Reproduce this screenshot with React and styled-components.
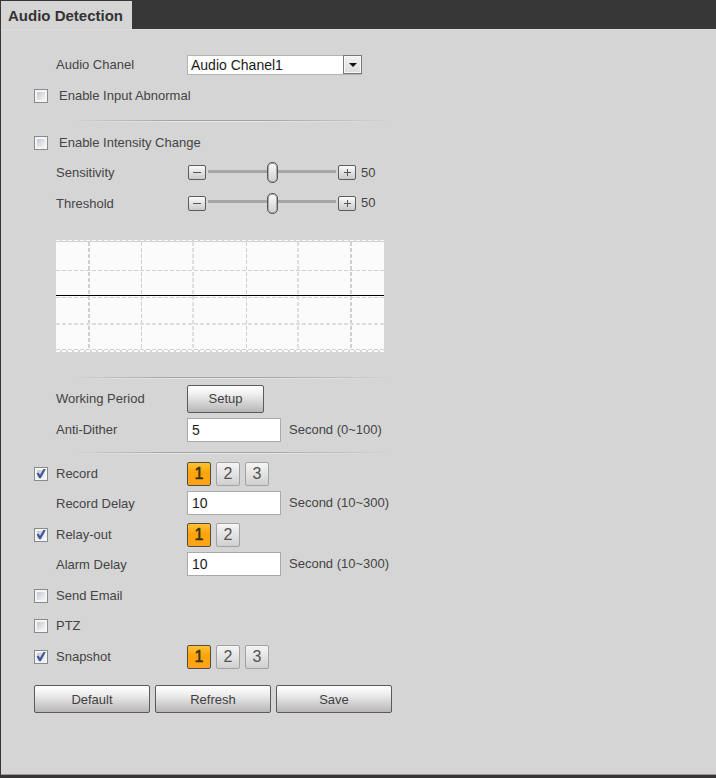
import React, { useState } from "react";
import styled, { createGlobalStyle } from "styled-components";

const GlobalStyle = createGlobalStyle`
  *, *::before, *::after { box-sizing: border-box; }
  body {
    margin: 0;
    background: #d5d5d5;
    color: #444;
    font: 13px/16px "Liberation Sans", Arial, sans-serif;
  }
  button, input, select { font-family: inherit; margin: 0; }
`;

const Page = styled.div`
  min-height: 100vh;
  display: flex;
  flex-direction: column;
  border-left: 1px solid #373535;
  border-bottom: 3px solid #373535;
  background: #d5d5d5;
`;

const TabBar = styled.header`
  display: flex;
  height: 29px;
  padding-top: 1px;
  background: #373737;
`;

const Tab = styled.h1`
  margin: 0;
  padding: 0 9px 0 7px;
  background: #d5d5d5;
  color: #333;
  font-size: 15px;
  font-weight: bold;
  line-height: 29px;
`;

const Panel = styled.form`
  flex: 1;
  padding: 20px 32px 60px 33px;
  border-top: 1px solid #dcdcdc;
  border-bottom: 1px solid #999;
`;

const Group = styled.div`
  display: grid;
  grid-template-rows: ${(p) => p.$rows};
`;

const Row = styled.div`
  display: grid;
  grid-template-columns: 22px 131px 1fr;
  align-items: center;
`;

const Label = styled.label`
  grid-column: 2;
  white-space: nowrap;
  padding-left: ${(p) => (p.$indent ? "3px" : "0")};
`;

const Field = styled.div`
  grid-column: 3;
  display: flex;
  align-items: center;
  gap: ${(p) => p.$gap || 0}px;
  padding-bottom: ${(p) => p.$lift || 0}px;
`;

const Checkbox = styled.input.attrs({ type: "checkbox" })`
  appearance: none;
  display: grid;
  place-items: center;
  width: 14px;
  height: 14px;
  border: 1px solid #8a8b8b;
  background: linear-gradient(135deg, #c4c8cf, #f6f6f6) center / 8px 8px no-repeat #f4f4f4;

  &:checked::after {
    content: "";
    width: 10px;
    height: 10px;
    background: #43589f;
    clip-path: polygon(6% 50%, 24% 40%, 40% 62%, 76% 2%, 98% 4%, 48% 98%, 32% 98%);
  }
`;

const SelectBox = styled.div`
  position: relative;
  width: 175px;
  height: 20px;
`;

const Select = styled.select`
  appearance: none;
  width: 100%;
  height: 100%;
  padding: 0 22px 0 3px;
  border: 1px solid #b4b4b8;
  border-radius: 0;
  background: #fff;
  color: #1b1b1b;
  font-size: 14px;
`;

const SelectArrow = styled.span`
  position: absolute;
  top: 0;
  right: 0;
  display: grid;
  place-items: center;
  width: 19px;
  height: 19px;
  border: 1px solid #777;
  background: linear-gradient(#f4f4f4, #dcdcdc);
  box-shadow: inset 0 0 0 1px #f8f8f8;
  pointer-events: none;
`;

const Divider = styled.hr`
  width: 320px;
  max-width: 100%;
  height: 2px;
  margin: ${(p) => p.$before}px 0 ${(p) => p.$after}px 38px;
  border: 0;
  background:
    linear-gradient(90deg, transparent, #a4a4a4 30%, #a4a4a4 60%, transparent) top / 100% 1px no-repeat,
    linear-gradient(90deg, transparent, #e6e6e6 30%, #e6e6e6 60%, transparent) bottom / 100% 1px no-repeat;
`;

const StepButton = styled.button`
  display: grid;
  place-items: center;
  width: 18px;
  height: 15px;
  padding: 0;
  border: 1px solid #5c5c5c;
  border-radius: 2px;
  background: linear-gradient(#fbfbfb, #c9c9c9);
`;

const Range = styled.input.attrs({ type: "range" })`
  appearance: none;
  width: 128px;
  height: 22px;
  background: linear-gradient(#a5a5a5, #a5a5a5) center 8px / 100% 3px no-repeat;

  &::-webkit-slider-thumb {
    appearance: none;
    width: 11px;
    height: 21px;
    border: 1px solid #585858;
    border-radius: 5px;
    background: linear-gradient(#fbfbfb, #cfcfcf);
    box-shadow: inset 0 0 0 1px #a8a8a8;
  }
`;

const Slider = styled.div`
  display: flex;
  align-items: center;
  gap: 2px;
  padding-left: 1px;
`;

const RangeValue = styled.output`
  margin-left: 5px;
`;

const Chart = styled.svg`
  display: block;
  margin: 21px 0 0 22px;
  max-width: 100%;
`;

const PushButton = styled.button`
  width: ${(p) => (p.$small ? "77px" : "116px")};
  height: 28px;
  padding: 0;
  border: 1px solid #5a5a5a;
  border-radius: 2px;
  background: linear-gradient(#fff, #f0f0f0 30%, #b8b6b6);
  color: #3f3f3f;
  font-size: 13px;
`;

const NumberInput = styled.input`
  width: 94px;
  height: 24px;
  padding: 0 4px;
  border: 1px solid #aaa;
  background: #fff;
  color: #1b1b1b;
  font-size: 14px;
`;

const ChannelButton = styled.button`
  width: 24px;
  height: 24px;
  padding: 0;
  border: 1px solid ${(p) => (p.$active ? "#514c45" : "#a2a2a2")};
  border-radius: 2px;
  background: ${(p) =>
    p.$active ? "linear-gradient(#ffc234, #ffa30a 45%, #ffa41c)" : "linear-gradient(#f5f5f5, #d0d0d0)"};
  color: ${(p) => (p.$active ? "#33330f" : "#505050")};
  -webkit-text-stroke: ${(p) => (p.$active ? "0.5px" : "0")};
  font-size: 16px;
  line-height: 20px;
`;

const Actions = styled.div`
  display: flex;
  gap: 5px;
  margin-top: 13px;
`;

function CheckRow({ id, label, checked, indent, children }) {
  return (
    <Row>
      <Checkbox id={id} defaultChecked={checked} />
      <Label htmlFor={id} $indent={indent}>{label}</Label>
      {children}
    </Row>
  );
}

function SliderRow({ id, label }) {
  const [value, setValue] = useState(50);
  return (
    <Row>
      <Label htmlFor={id}>{label}</Label>
      <Field $lift={1}>
        <Slider>
          <StepButton type="button" aria-label={`Decrease ${label}`} onClick={() => setValue(Math.max(0, value - 1))}>
            <svg width="9" height="9"><path d="M0 4.5h8" stroke="#555" /></svg>
          </StepButton>
          <Range id={id} value={value} onChange={(e) => setValue(Number(e.target.value))} />
          <StepButton type="button" aria-label={`Increase ${label}`} onClick={() => setValue(Math.min(100, value + 1))}>
            <svg width="9" height="9"><path d="M1 4.5h7M4.5 1v7" stroke="#555" /></svg>
          </StepButton>
        </Slider>
        <RangeValue htmlFor={id}>{value}</RangeValue>
      </Field>
    </Row>
  );
}

function NumberRow({ id, label, value, range, lift }) {
  return (
    <Row>
      <Label htmlFor={id}>{label}</Label>
      <Field $gap={8} $lift={lift}>
        <NumberInput id={id} defaultValue={value} inputMode="numeric" />
        <span>Second ({range})</span>
      </Field>
    </Row>
  );
}

function Channels({ count }) {
  const [active, setActive] = useState([1]);
  const toggle = (n) => setActive(active.includes(n) ? active.filter((x) => x !== n) : [...active, n]);
  return (
    <Field $gap={5}>
      {Array.from({ length: count }, (_, i) => i + 1).map((n) => (
        <ChannelButton
          key={n}
          type="button"
          $active={active.includes(n)}
          aria-pressed={active.includes(n)}
          onClick={() => toggle(n)}
        >
          {n}
        </ChannelButton>
      ))}
    </Field>
  );
}

function IntensityChart() {
  return (
    <Chart width="328" height="112" viewBox="0 0 328 112" role="img" aria-label="Audio intensity">
      <rect y="2" width="328" height="108" fill="#fbfbfb" />
      <g fill="none" stroke="#fbfbfb" strokeWidth="2" strokeDasharray="4 2">
        <path d="M0 1h328M0 111h328" />
      </g>
      <g fill="none" stroke="#cfcfcf" strokeDasharray="4 2">
        <path d="M0 1.5h328M0 109.5h328" />
        <path d="M0 30.5h328M0 57.5h328" />
        <path d="M85.5 2v108M190.5 2v108" />
        <path d="M33 2v108M295 2v108" strokeWidth="2" />
      </g>
      <g fill="none" stroke="#dedede" strokeWidth="2" strokeDasharray="4 2">
        <path d="M0 84h328M137 2v108M242 2v108" />
      </g>
      <path d="M0 55.5h328" stroke="#000" />
    </Chart>
  );
}

export default function App() {
  return (
    <>
      <GlobalStyle />
      <Page>
        <TabBar>
          <Tab>Audio Detection</Tab>
        </TabBar>
        <Panel onSubmit={(e) => e.preventDefault()}>
          <Group $rows="30px 32px">
            <Row>
              <Label htmlFor="channel">Audio Chanel</Label>
              <Field>
                <SelectBox>
                  <Select id="channel"><option>Audio Chanel1</option></Select>
                  <SelectArrow>
                    <svg width="8" height="4"><path d="M0 0h8L4 4z" fill="#111" /></svg>
                  </SelectArrow>
                </SelectBox>
              </Field>
            </Row>
            <CheckRow id="abnormal" label="Enable Input Abnormal" indent />
          </Group>
          <Divider $before={8} $after={5} />
          <Group $rows="31px 30px 31px">
            <CheckRow id="intensity" label="Enable Intensity Change" indent />
            <SliderRow id="sensitivity" label="Sensitivity" />
            <SliderRow id="threshold" label="Threshold" />
          </Group>
          <IntensityChart />
          <Divider $before={25} $after={4} />
          <Group $rows="31px 31px">
            <Row>
              <Label as="span">Working Period</Label>
              <Field><PushButton type="button" $small>Setup</PushButton></Field>
            </Row>
            <NumberRow id="dither" label="Anti-Dither" value="5" range="0~100" />
          </Group>
          <Divider $before={7} $after={4} />
          <Group $rows="31px 30px 31px 30px 31px 30px 31px">
            <CheckRow id="record" label="Record" checked><Channels count={3} /></CheckRow>
            <NumberRow id="record-delay" label="Record Delay" value="10" range="10~300" lift={2} />
            <CheckRow id="relay" label="Relay-out" checked><Channels count={2} /></CheckRow>
            <NumberRow id="alarm-delay" label="Alarm Delay" value="10" range="10~300" lift={2} />
            <CheckRow id="email" label="Send Email" />
            <CheckRow id="ptz" label="PTZ" />
            <CheckRow id="snapshot" label="Snapshot" checked><Channels count={3} /></CheckRow>
          </Group>
          <Actions>
            <PushButton type="reset">Default</PushButton>
            <PushButton type="button">Refresh</PushButton>
            <PushButton type="submit">Save</PushButton>
          </Actions>
        </Panel>
      </Page>
    </>
  );
}
